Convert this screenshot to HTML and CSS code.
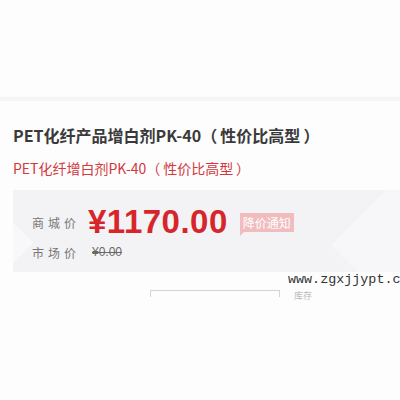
FILE: index.html
```html
<!DOCTYPE html>
<html lang="zh-CN">
<head>
  <meta charset="UTF-8" />
  <meta name="viewport" content="width=device-width, initial-scale=1.0"/>
  <title>PET化纤产品增白剂PK-40</title>
  <link rel="stylesheet" href="styles.css">
</head>
<body>
  <div class="top-blank"></div>
  <div class="band"></div>

  <div class="product">
    <h1 class="title">PET化纤产品增白剂PK-40（&thinsp;性价比高型&thinsp;）</h1>
    <div class="subtitle">PET化纤增白剂PK-40（&thinsp;性价比高型&thinsp;）</div>

    <div class="price-box">
      <div class="row">
        <span class="label">商城价</span>
        <span class="price">¥1170.00</span>
        <span class="notice">降价通知</span>
      </div>
      <div class="row">
        <span class="label">市场价</span>
        <span class="old-price">¥0.00</span>
      </div>
    </div>

    <div class="watermark">www.zgxjjypt.c</div>

    <div class="buy">
      <div class="qty"></div>
      <span class="qty-note">库存</span>
    </div>
  </div>
</body>
</html>
```

FILE: styles.css
```css
html, body {
  margin: 0;
  padding: 0;
  background-color: #fdfdfd;
  font-family: "Noto Sans CJK SC", "Microsoft YaHei", sans-serif;
  overflow: hidden;
}

.top-blank {
  height: 97px;
}

.band {
  height: 4px;
  background: #f5f5f5;
}

.product {
  padding: 0 0 0 13px;
}

.title {
  margin: 23px 0 0 0;
  font-size: 16px;
  line-height: 22px;
  font-weight: bold;
  color: #3a3a3a;
}

.subtitle {
  margin-top: 12px;
  font-size: 14px;
  line-height: 20px;
  color: #d2383c;
}

.price-box {
  position: relative;
  overflow: hidden;
  margin-top: 12px;
  height: 82px;
  padding: 16px 0 0 19px;
  box-sizing: border-box;
  background: #f3f2f4;
}

.price-box::before {
  content: "";
  position: absolute;
  left: -30px;
  top: 32px;
  width: 42px;
  height: 42px;
  background: #f8f7f9;
  transform: rotate(45deg);
}

.price-box::after {
  content: "";
  position: absolute;
  right: -40px;
  top: 10px;
  width: 90px;
  height: 90px;
  background: #f7f6f8;
  transform: rotate(45deg);
}

.row {
  position: relative;
  z-index: 1;
  display: flex;
  align-items: center;
}

.label {
  width: 56px;
  font-size: 12px;
  letter-spacing: 4px;
  color: #777;
}

.price {
  font-family: "Liberation Sans", Arial, sans-serif;
  font-size: 33px;
  line-height: 32px;
  font-weight: bold;
  color: #d7262b;
  letter-spacing: 0.5px;
}

.notice {
  position: relative;
  margin-left: 12px;
  padding: 0 3px;
  font-size: 12px;
  line-height: 19px;
  color: #fff;
  background: #f0bcbe;
}

.notice::after {
  content: "";
  position: absolute;
  left: 0;
  bottom: -4px;
  border-top: 4px solid #f0bcbe;
  border-right: 4px solid transparent;
}

.old-price {
  margin-left: 4px;
  font-family: "Liberation Sans", Arial, sans-serif;
  font-size: 12px;
  line-height: 28px;
  color: #666;
  text-decoration: line-through;
}

.watermark {
  margin: 1px 0 0 275px;
  font-family: "Liberation Mono", "Courier New", monospace;
  font-size: 13.4px;
  line-height: 14px;
  color: #333;
  white-space: nowrap;
}

.buy {
  display: flex;
  align-items: flex-start;
  margin: 3px 0 0 137px;
}

.qty {
  width: 128px;
  height: 6px;
  border: 1px solid #d3d3d3;
  border-bottom: none;
}

.qty-note {
  margin: 0 0 0 14px;
  font-size: 9px;
  line-height: 12px;
  color: #bbb;
}
```
